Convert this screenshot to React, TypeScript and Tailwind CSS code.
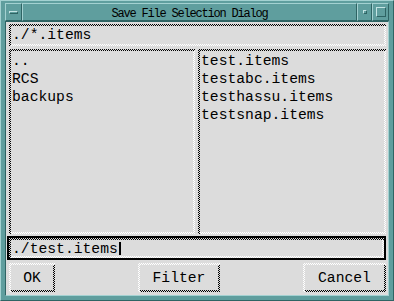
import React from "react";

const DARK =
  "bg-[image:repeating-conic-gradient(#000000_0%_25%,#dcdcdc_0%_50%)] bg-[length:2px_2px]";
const LIGHT =
  "bg-[image:repeating-conic-gradient(#ffffff_0%_25%,#dcdcdc_0%_50%)] bg-[length:2px_2px]";

const BEVEL_UP =
  "border border-t-[#a3d1d1] border-l-[#a3d1d1] border-r-[#2e6464] border-b-[#2e6464]";

function Sunken({
  className = "",
  children,
}: {
  className?: string;
  children?: React.ReactNode;
}) {
  return (
    <div className={`pt-[2px] pl-[2px] ${DARK} ${className}`}>
      <div className={`h-full pr-[2px] pb-[2px] ${LIGHT}`}>
        <div className="h-full bg-[#dcdcdc] overflow-hidden">{children}</div>
      </div>
    </div>
  );
}

function Button({ label, className = "" }: { label: string; className?: string }) {
  return (
    <div className={`h-full pt-[2px] pl-[2px] ${LIGHT} ${className}`}>
      <div className={`h-full pr-[2px] pb-[2px] ${DARK}`}>
        <div className="h-full bg-[#dcdcdc] flex items-center justify-center leading-[18px]">
          {label}
        </div>
      </div>
    </div>
  );
}

export default function App() {
  const dirs = ["..", "RCS", "backups"];
  const files = ["test.items", "testabc.items", "testhassu.items", "testsnap.items"];
  return (
    <div
      className="w-[394px] h-[301px] bg-[#5f9e9e] border border-t-[#a3d1d1] border-l-[#a3d1d1] border-r-[#2e6464] border-b-[#2e6464] pt-[2px] px-[4px] pb-[4px] flex flex-col text-black"
      style={{ fontFamily: '"Liberation Mono", monospace' }}
    >
      {/* title bar */}
      <div className="h-[18px] flex">
        <div className={`w-[17px] h-full ${BEVEL_UP} flex items-center justify-center`}>
          <div className="w-[9px] h-[3px] border-t border-l border-t-[#c4e4e4] border-l-[#c4e4e4] border-b border-r border-b-[#2e6464] border-r-[#2e6464] bg-[#5f9e9e]" />
        </div>
        <div
          className={`flex-1 h-full ${BEVEL_UP} flex justify-center items-start pt-[3px] text-[12px] leading-[14px] tracking-[-1.2px] whitespace-nowrap`}
        >
          Save File Selection Dialog
        </div>
        <div className={`w-[15px] h-full ${BEVEL_UP} flex items-center justify-center`}>
          <div className="w-[4px] h-[4px] border-t border-l border-t-[#c4e4e4] border-l-[#c4e4e4] border-b border-r border-b-[#2e6464] border-r-[#2e6464]" />
        </div>
        <div className={`w-[17px] h-full ${BEVEL_UP} flex items-center justify-center`}>
          <div className="w-[10px] h-[10px] border-t border-l border-t-[#c4e4e4] border-l-[#c4e4e4] border-b border-r border-b-[#2e6464] border-r-[#2e6464]" />
        </div>
      </div>

      {/* client area */}
      <div className="flex-1 border border-t-[#2e6464] border-l-[#2e6464] border-r-[#a3d1d1] border-b-[#a3d1d1] bg-[#dcdcdc] pl-[3px] pr-[2px] pt-[2px] flex flex-col text-[14.7px]">
        <Sunken className="h-[22px]">
          <div className="pl-[1px] leading-[18px] whitespace-pre">./*.items</div>
        </Sunken>

        <div className="mt-[3px] h-[185px] flex gap-[3px]">
          <Sunken className="w-[186px] h-full">
            <div className="pl-[1px] pt-[1px] leading-[18px]">
              {dirs.map((d) => (
                <div key={d} className="whitespace-pre">
                  {d}
                </div>
              ))}
            </div>
          </Sunken>
          <Sunken className="flex-1 h-full">
            <div className="pl-[1px] pt-[1px] leading-[18px]">
              {files.map((f) => (
                <div key={f} className="whitespace-pre">
                  {f}
                </div>
              ))}
            </div>
          </Sunken>
        </div>

        <div className="mt-[2px] -ml-[2px] h-[24px] border-2 border-black">
          <Sunken className="h-full">
            <div className="pl-[1px] leading-[18px] whitespace-pre">
              ./test.items
              <span className="inline-block w-[2px] h-[13px] bg-black ml-[1px] align-[-2px]" />
            </div>
          </Sunken>
        </div>

        <div className="mt-[3px] h-[29px] flex justify-between">
          <Button label="OK" className="w-[46px]" />
          <Button label="Filter" className="w-[82px]" />
          <Button label="Cancel" className="w-[83px]" />
        </div>
      </div>
    </div>
  );
}
